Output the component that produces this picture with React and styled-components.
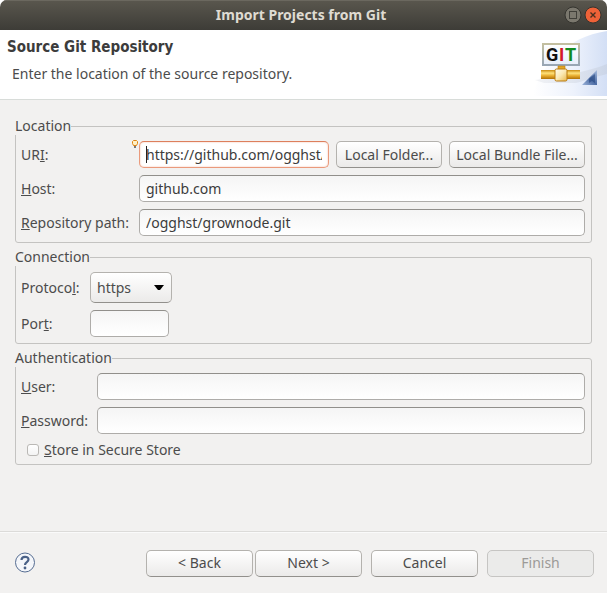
import React from "react";
import styled, { createGlobalStyle, css } from "styled-components";

const GlobalStyle = createGlobalStyle`
  * { box-sizing: border-box; }
  body {
    margin: 0;
    background: #fff;
    color: #4c4c4c;
    font: 14px/18px "Noto Sans", "Open Sans", sans-serif;
  }
  button, input, select { font: inherit; color: inherit; margin: 0; }
`;

const Window = styled.div`
  display: flex;
  flex-direction: column;
  min-height: 100vh;
  background: #f2f1f0;
  border-radius: 7px 7px 0 0;
  overflow: hidden;
`;

const TitleBar = styled.header`
  display: grid;
  grid-template-columns: 1fr auto 1fr;
  align-items: center;
  height: 30px;
  padding-right: 5px;
  background: linear-gradient(#5a574e, #3d3c37);
  box-shadow: inset 0 1px #6b685f;
`;

const WindowTitle = styled.h1`
  grid-column: 2;
  margin: 0;
  font-size: 14px;
  line-height: 18px;
  font-weight: 700;
  color: #dfdbd2;
`;

const WindowButtons = styled.div`
  display: flex;
  justify-content: flex-end;
  gap: 2px;
`;

const WindowButton = styled.button`
  width: 18px;
  height: 18px;
  padding: 0;
  border: 0;
  background: none;
  svg { display: block; }
`;

const Banner = styled.section`
  display: flex;
  justify-content: space-between;
  height: 70px;
  background: #fff;
  border-bottom: 1px solid #d8dcd9;
`;

const BannerText = styled.div`
  padding: 8px 7px;
`;

const BannerTitle = styled.h2`
  margin: 0;
  font: bold 15px/18px "DejaVu Sans Condensed", "Noto Sans", sans-serif;
  color: #3c3c3c;
`;

const BannerMessage = styled.p`
  margin: 9px 5px 0;
`;

const Form = styled.form`
  display: flex;
  flex: 1;
  flex-direction: column;
`;

const Content = styled.main`
  display: flex;
  flex: 1;
  flex-direction: column;
  gap: 5px;
  padding: 17px 15px;
`;

const Group = styled.fieldset`
  min-width: 0;
  margin: 0;
  padding: 0;
  border: 1px solid #c4c3c1;
  border-radius: 3px;
`;

const Legend = styled.legend`
  margin-left: -1px;
  padding: 0;
  background: #f2f1f0;
`;

const Fields = styled.div`
  display: grid;
  grid-template-columns: ${(p) => p.$labelWidth}px minmax(0, 1fr);
  align-items: center;
  gap: 7px;
  padding: 6px 6px 6px 5px;
`;

const Label = styled.label`
  white-space: nowrap;
`;

const LocationRow = styled.div`
  display: flex;
  gap: 7px;
`;

const InputWrap = styled.div`
  position: relative;
  display: flex;
  flex: 1;
  min-width: 0;
`;

const TextInput = styled.input`
  width: ${(p) => (p.$short ? "79px" : "100%")};
  height: 27px;
  padding: 0 6px;
  border: 1px solid #aeaca9;
  border-top-color: #918f8b;
  border-radius: 5px;
  background: linear-gradient(#f5f5f5, #fff);
  color: #3c3c3c;
  outline: 0;
  ${(p) =>
    p.$active &&
    css`
      border-color: #ea9a7c;
      border-top-color: #dd7f5c;
      box-shadow: inset 0 0 2px #f3bca8;
      background: #fff;
    `}
`;

const Caret = styled.span`
  position: absolute;
  left: 7px;
  top: 5px;
  width: 1px;
  height: 17px;
  background: #222;
`;

const HintBulb = styled.svg`
  position: absolute;
  left: -7px;
  top: -1px;
`;

const raised = css`
  border: 1px solid #b4b2ae;
  border-bottom-color: #92908c;
  border-radius: 5px;
  background: linear-gradient(#fff, #ebeae9);
`;

const Button = styled.button`
  ${raised}
  width: ${(p) => p.$width}px;
  height: 27px;
  padding: 0;
  white-space: nowrap;
  &:disabled {
    color: #9c9a97;
    background: #ebebea;
    border-color: #c6c5c3;
  }
`;

const SelectWrap = styled.div`
  position: relative;
  display: flex;
  width: 82px;
  svg {
    position: absolute;
    right: 8px;
    top: 13px;
    pointer-events: none;
  }
`;

const Select = styled.select`
  ${raised}
  appearance: none;
  width: 100%;
  height: 31px;
  padding: 0 6px;
`;

const CheckLabel = styled.label`
  display: flex;
  grid-column: 1 / -1;
  align-items: center;
  gap: 5px;
  height: 17px;
  padding-left: 6px;
`;

const CheckBox = styled.input`
  appearance: none;
  width: 12px;
  height: 12px;
  border: 1px solid #bab8b5;
  border-radius: 3px;
  background: linear-gradient(#fff, #f3f3f3);
`;

const Footer = styled.footer`
  display: flex;
  align-items: center;
  justify-content: space-between;
  height: 62px;
  padding: 1px 13px 0 14px;
  border-top: 1px solid #dcdbd9;
  box-shadow: inset 0 1px #fafafa;
`;

const HelpButton = styled.button`
  width: 22px;
  height: 22px;
  padding: 0;
  border: 0;
  background: none;
  svg { display: block; }
`;

const Actions = styled.div`
  display: flex;
  gap: 9px;
`;

const StepActions = styled.div`
  display: flex;
  gap: 2px;
`;

function GitArt() {
  return (
    <svg width="75" height="69" viewBox="0 0 75 69" role="img" aria-label="GIT">
      <defs>
        <linearGradient id="sky" x1="0" y1="0" x2="1" y2="0">
          <stop offset="0" stopColor="#fff" />
          <stop offset="0.55" stopColor="#edf2fc" />
          <stop offset="1" stopColor="#d3dff5" />
        </linearGradient>
        <linearGradient id="haze" x1="0" y1="0" x2="1" y2="0">
          <stop offset="0" stopColor="#e9ebef" />
          <stop offset="1" stopColor="#c6cfdf" />
        </linearGradient>
        <linearGradient id="pipe" x1="0" y1="0" x2="0" y2="1">
          <stop offset="0" stopColor="#c98a10" />
          <stop offset="0.35" stopColor="#ffe27a" />
          <stop offset="0.65" stopColor="#e7ab2c" />
          <stop offset="1" stopColor="#b17208" />
        </linearGradient>
        <linearGradient id="joint" x1="0" y1="0" x2="1" y2="1">
          <stop offset="0" stopColor="#fffdf0" />
          <stop offset="0.5" stopColor="#fbe9b4" />
          <stop offset="1" stopColor="#e8b84c" />
        </linearGradient>
        <linearGradient id="plate" x1="0" y1="0" x2="0" y2="1">
          <stop offset="0" stopColor="#fff" />
          <stop offset="1" stopColor="#e6eefa" />
        </linearGradient>
        <linearGradient id="frame" x1="0" y1="0" x2="0" y2="1">
          <stop offset="0" stopColor="#c3bfa0" />
          <stop offset="1" stopColor="#98a6b4" />
        </linearGradient>
        <linearGradient id="fold" x1="0" y1="1" x2="1" y2="0">
          <stop offset="0" stopColor="#9db4da" />
          <stop offset="0.5" stopColor="#4a6aa3" />
          <stop offset="1" stopColor="#a9bedf" />
        </linearGradient>
      </defs>
      <path d="M1 66 C7 37 34 7 75 1 V66Z" fill="url(#sky)" />
      <path d="M3 50 C23 48 55 42 75 34 V44 C62 47 55 50 44 53 H12Z" fill="url(#haze)" opacity="0.6" />
      <rect x="11" y="14" width="36" height="21" fill="url(#plate)" stroke="url(#frame)" strokeWidth="2" />
      <g fontFamily="Roboto, sans-serif" fontWeight="bold" fontSize="18">
        <text x="14" y="31" fill="#111">G</text>
        <text x="27" y="31" fill="#d3162b">I</text>
        <text x="33" y="31" fill="#128a1e">T</text>
      </g>
      <path d="M26 36h7v4h-7z" fill="#e4a726" stroke="#b97e12" strokeWidth="0.6" />
      <rect x="9" y="40" width="39" height="9" fill="url(#pipe)" />
      <rect x="23" y="39" width="12" height="12" rx="1.5" fill="url(#joint)" stroke="#b87a10" />
      <path d="M65 40V55H50Z" fill="url(#fold)" />
      <path d="M63 44V53L60 51L57 53V49Z" fill="#264780" opacity="0.6" />
    </svg>
  );
}

export default function App() {
  return (
    <>
      <GlobalStyle />
      <Window>
        <TitleBar>
          <WindowTitle>Import Projects from Git</WindowTitle>
          <WindowButtons>
            <WindowButton type="button" aria-label="Maximize">
              <svg width="18" height="18">
                <circle cx="9" cy="9" r="8" fill="#7b786e" stroke="#35342f" />
                <rect x="5.5" y="5.5" width="7" height="7" fill="none" stroke="#403f39" />
              </svg>
            </WindowButton>
            <WindowButton type="button" aria-label="Close">
              <svg width="18" height="18">
                <circle cx="9" cy="9" r="8" fill="#ee6238" stroke="#35342f" />
                <path d="M6.5 6.5l5 5M11.5 6.5l-5 5" stroke="#49301f" strokeWidth="1.4" />
              </svg>
            </WindowButton>
          </WindowButtons>
        </TitleBar>

        <Banner>
          <BannerText>
            <BannerTitle>Source Git Repository</BannerTitle>
            <BannerMessage>Enter the location of the source repository.</BannerMessage>
          </BannerText>
          <GitArt />
        </Banner>

        <Form onSubmit={(e) => e.preventDefault()}>
          <Content>
            <Group>
              <Legend>Location</Legend>
              <Fields $labelWidth={111}>
                <Label htmlFor="uri">UR<u>I</u>:</Label>
                <LocationRow>
                  <InputWrap>
                    <HintBulb width="6" height="9" aria-hidden="true">
                      <path d="M1.5 0.5h3l1 1v2l-1 2h-3l-1-2v-2z" fill="#fff0c4" stroke="#df8412" />
                      <path d="M2 6h2v2H2z" fill="#777" />
                    </HintBulb>
                    <TextInput id="uri" $active defaultValue="https://github.com/ogghst/grownode.git" />
                    <Caret />
                  </InputWrap>
                  <Button type="button" $width={106}>Local Folder...</Button>
                  <Button type="button" $width={136}>Local Bundle File...</Button>
                </LocationRow>
                <Label htmlFor="host"><u>H</u>ost:</Label>
                <TextInput id="host" defaultValue="github.com" />
                <Label htmlFor="path"><u>R</u>epository path:</Label>
                <TextInput id="path" defaultValue="/ogghst/grownode.git" />
              </Fields>
            </Group>

            <Group>
              <Legend>Connection</Legend>
              <Fields $labelWidth={62}>
                <Label htmlFor="protocol">Protoco<u>l</u>:</Label>
                <SelectWrap>
                  <Select id="protocol" defaultValue="https">
                    <option>https</option>
                    <option>ssh</option>
                    <option>git</option>
                  </Select>
                  <svg width="10" height="6" aria-hidden="true">
                    <path d="M0 0h10L6 5H4z" fill="#000" />
                  </svg>
                </SelectWrap>
                <Label htmlFor="port">Por<u>t</u>:</Label>
                <TextInput id="port" $short />
              </Fields>
            </Group>

            <Group>
              <Legend>Authentication</Legend>
              <Fields $labelWidth={69}>
                <Label htmlFor="user"><u>U</u>ser:</Label>
                <TextInput id="user" />
                <Label htmlFor="password"><u>P</u>assword:</Label>
                <TextInput id="password" type="password" />
                <CheckLabel>
                  <CheckBox type="checkbox" />
                  <span><u>S</u>tore in Secure Store</span>
                </CheckLabel>
              </Fields>
            </Group>
          </Content>

          <Footer>
            <HelpButton type="button" aria-label="Help">
              <svg width="22" height="22" fill="none">
                <circle cx="11" cy="10.5" r="9.5" fill="#f4f6fa" stroke="#566d92" />
                <path d="M7.5 8C7.5 3.8 14.5 3.8 14.5 7.5C14.5 10.2 11 10 11 13" stroke="#4a6187" strokeWidth="2.2" />
                <circle cx="11" cy="16" r="1.4" fill="#4a6187" />
              </svg>
            </HelpButton>
            <Actions>
              <StepActions>
                <Button type="button" $width={107}>&lt; Back</Button>
                <Button type="submit" $width={107}>Next &gt;</Button>
              </StepActions>
              <Button type="button" $width={107}>Cancel</Button>
              <Button type="button" $width={107} disabled>Finish</Button>
            </Actions>
          </Footer>
        </Form>
      </Window>
    </>
  );
}
